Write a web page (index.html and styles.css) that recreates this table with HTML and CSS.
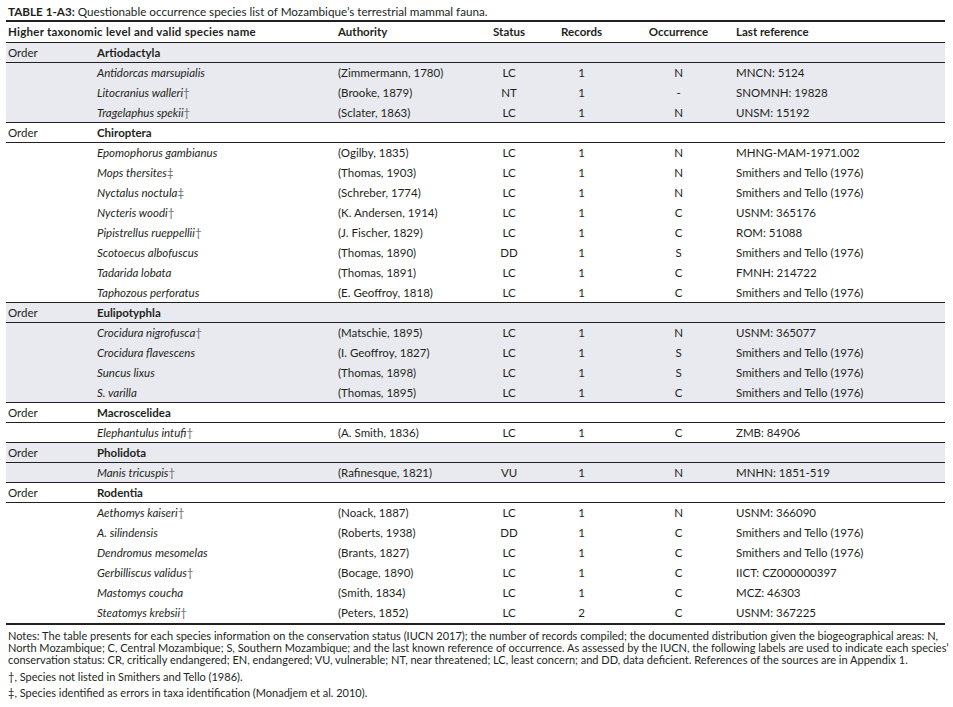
FILE: index.html
```html
<!DOCTYPE html>
<html lang="en">
<head>
<meta charset="utf-8">
<title>Table 1-A3</title>
<link rel="stylesheet" href="styles.css">
</head>
<body>
<div class="page">
  <h1 class="title"><b>TABLE 1-A3:</b> Questionable occurrence species list of Mozambique’s terrestrial mammal fauna.</h1>
  <table class="tbl">
    <colgroup>
      <col class="c1"><col class="c2"><col class="c3"><col class="c4"><col class="c5"><col class="c6"><col class="c7">
    </colgroup>
    <thead>
      <tr>
        <th colspan="2" class="l1 wide">Higher taxonomic level and valid species name</th>
        <th class="l3">Authority</th>
        <th class="ctr">Status</th>
        <th class="ctr">Records</th>
        <th class="occ">Occurrence</th>
        <th class="l7">Last reference</th>
      </tr>
    </thead>
    <tbody class="sh">
      <tr class="ord"><td class="l1">Order</td><td class="l2 grp">Artiodactyla</td><td></td><td></td><td></td><td></td><td></td></tr>
      <tr><td></td><td class="l2 sp">Antidorcas marsupialis</td><td class="l3">(Zimmermann, 1780)</td><td class="ctr">LC</td><td class="ctr">1</td><td class="occ">N</td><td class="l7">MNCN: 5124</td></tr>
      <tr><td></td><td class="l2 sp">Litocranius walleri<span class="mk">†</span></td><td class="l3">(Brooke, 1879)</td><td class="ctr">NT</td><td class="ctr">1</td><td class="occ">-</td><td class="l7">SNOMNH: 19828</td></tr>
      <tr class="end"><td></td><td class="l2 sp">Tragelaphus spekii<span class="mk">†</span></td><td class="l3">(Sclater, 1863)</td><td class="ctr">LC</td><td class="ctr">1</td><td class="occ">N</td><td class="l7">UNSM: 15192</td></tr>
    </tbody>
    <tbody>
      <tr class="ord"><td class="l1">Order</td><td class="l2 grp">Chiroptera</td><td></td><td></td><td></td><td></td><td></td></tr>
      <tr><td></td><td class="l2 sp">Epomophorus gambianus</td><td class="l3">(Ogilby, 1835)</td><td class="ctr">LC</td><td class="ctr">1</td><td class="occ">N</td><td class="l7">MHNG-MAM-1971.002</td></tr>
      <tr><td></td><td class="l2 sp">Mops thersites<span class="mk">‡</span></td><td class="l3">(Thomas, 1903)</td><td class="ctr">LC</td><td class="ctr">1</td><td class="occ">N</td><td class="l7">Smithers and Tello (1976)</td></tr>
      <tr><td></td><td class="l2 sp">Nyctalus noctula<span class="mk">‡</span></td><td class="l3">(Schreber, 1774)</td><td class="ctr">LC</td><td class="ctr">1</td><td class="occ">N</td><td class="l7">Smithers and Tello (1976)</td></tr>
      <tr><td></td><td class="l2 sp">Nycteris woodi<span class="mk">†</span></td><td class="l3">(K. Andersen, 1914)</td><td class="ctr">LC</td><td class="ctr">1</td><td class="occ">C</td><td class="l7">USNM: 365176</td></tr>
      <tr><td></td><td class="l2 sp">Pipistrellus rueppellii<span class="mk">†</span></td><td class="l3">(J. Fischer, 1829)</td><td class="ctr">LC</td><td class="ctr">1</td><td class="occ">C</td><td class="l7">ROM: 51088</td></tr>
      <tr><td></td><td class="l2 sp">Scotoecus albofuscus</td><td class="l3">(Thomas, 1890)</td><td class="ctr">DD</td><td class="ctr">1</td><td class="occ">S</td><td class="l7">Smithers and Tello (1976)</td></tr>
      <tr><td></td><td class="l2 sp">Tadarida lobata</td><td class="l3">(Thomas, 1891)</td><td class="ctr">LC</td><td class="ctr">1</td><td class="occ">C</td><td class="l7">FMNH: 214722</td></tr>
      <tr class="end"><td></td><td class="l2 sp">Taphozous perforatus</td><td class="l3">(E. Geoffroy, 1818)</td><td class="ctr">LC</td><td class="ctr">1</td><td class="occ">C</td><td class="l7">Smithers and Tello (1976)</td></tr>
    </tbody>
    <tbody class="sh">
      <tr class="ord"><td class="l1">Order</td><td class="l2 grp">Eulipotyphla</td><td></td><td></td><td></td><td></td><td></td></tr>
      <tr><td></td><td class="l2 sp">Crocidura nigrofusca<span class="mk">†</span></td><td class="l3">(Matschie, 1895)</td><td class="ctr">LC</td><td class="ctr">1</td><td class="occ">N</td><td class="l7">USNM: 365077</td></tr>
      <tr><td></td><td class="l2 sp">Crocidura flavescens</td><td class="l3">(I. Geoffroy, 1827)</td><td class="ctr">LC</td><td class="ctr">1</td><td class="occ">S</td><td class="l7">Smithers and Tello (1976)</td></tr>
      <tr><td></td><td class="l2 sp">Suncus lixus</td><td class="l3">(Thomas, 1898)</td><td class="ctr">LC</td><td class="ctr">1</td><td class="occ">S</td><td class="l7">Smithers and Tello (1976)</td></tr>
      <tr class="end"><td></td><td class="l2 sp">S. varilla</td><td class="l3">(Thomas, 1895)</td><td class="ctr">LC</td><td class="ctr">1</td><td class="occ">C</td><td class="l7">Smithers and Tello (1976)</td></tr>
    </tbody>
    <tbody>
      <tr class="ord"><td class="l1">Order</td><td class="l2 grp">Macroscelidea</td><td></td><td></td><td></td><td></td><td></td></tr>
      <tr class="end"><td></td><td class="l2 sp">Elephantulus intufi<span class="mk">†</span></td><td class="l3">(A. Smith, 1836)</td><td class="ctr">LC</td><td class="ctr">1</td><td class="occ">C</td><td class="l7">ZMB: 84906</td></tr>
    </tbody>
    <tbody class="sh">
      <tr class="ord"><td class="l1">Order</td><td class="l2 grp">Pholidota</td><td></td><td></td><td></td><td></td><td></td></tr>
      <tr class="end"><td></td><td class="l2 sp">Manis tricuspis<span class="mk">†</span></td><td class="l3">(Rafinesque, 1821)</td><td class="ctr">VU</td><td class="ctr">1</td><td class="occ">N</td><td class="l7">MNHN: 1851-519</td></tr>
    </tbody>
    <tbody>
      <tr class="ord"><td class="l1">Order</td><td class="l2 grp">Rodentia</td><td></td><td></td><td></td><td></td><td></td></tr>
      <tr><td></td><td class="l2 sp">Aethomys kaiseri<span class="mk">†</span></td><td class="l3">(Noack, 1887)</td><td class="ctr">LC</td><td class="ctr">1</td><td class="occ">N</td><td class="l7">USNM: 366090</td></tr>
      <tr><td></td><td class="l2 sp">A. silindensis</td><td class="l3">(Roberts, 1938)</td><td class="ctr">DD</td><td class="ctr">1</td><td class="occ">C</td><td class="l7">Smithers and Tello (1976)</td></tr>
      <tr><td></td><td class="l2 sp">Dendromus mesomelas</td><td class="l3">(Brants, 1827)</td><td class="ctr">LC</td><td class="ctr">1</td><td class="occ">C</td><td class="l7">Smithers and Tello (1976)</td></tr>
      <tr><td></td><td class="l2 sp">Gerbilliscus validus<span class="mk">†</span></td><td class="l3">(Bocage, 1890)</td><td class="ctr">LC</td><td class="ctr">1</td><td class="occ">C</td><td class="l7">IICT: CZ000000397</td></tr>
      <tr><td></td><td class="l2 sp">Mastomys coucha</td><td class="l3">(Smith, 1834)</td><td class="ctr">LC</td><td class="ctr">1</td><td class="occ">C</td><td class="l7">MCZ: 46303</td></tr>
      <tr><td></td><td class="l2 sp">Steatomys krebsii<span class="mk">†</span></td><td class="l3">(Peters, 1852)</td><td class="ctr">LC</td><td class="ctr">2</td><td class="occ">C</td><td class="l7">USNM: 367225</td></tr>
    </tbody>
  </table>
  <div class="notes">
    <p class="para">Notes: The table presents for each species information on the conservation status (IUCN 2017); the number of records compiled; the documented distribution given the biogeographical areas: N,<br>North Mozambique; C, Central Mozambique; S, Southern Mozambique; and the last known reference of occurrence. As assessed by the IUCN, the following labels are used to indicate each species’<br>conservation status: CR, critically endangered; EN, endangered; VU, vulnerable; NT, near threatened; LC, least concern; and DD, data deficient. References of the sources are in Appendix 1.</p>
    <p class="fn">†, Species not listed in Smithers and Tello (1986).</p>
    <p class="fn">‡, Species identified as errors in taxa identification (Monadjem et al. 2010).</p>
  </div>
</div>
</body>
</html>
```
FILE: styles.css
```css
html, body {
  margin: 0;
  padding: 0;
  background: #ffffff;
}

body {
  color: #231f20;
  font-family: Lato, "Liberation Sans", sans-serif;
}

.page {
  width: 939px;
  margin-left: 6px;
}

.title {
  margin: 0;
  padding: 3px 0 0 2px;
  height: 17px;
  line-height: 17px;
  font-size: 11.7px;
  font-weight: normal;
  white-space: nowrap;
}

.title b {
  font-weight: bold;
}

.tbl {
  width: 939px;
  table-layout: fixed;
  border-collapse: separate;
  border-spacing: 0;
  border-top: 2px solid #231f20;
  border-bottom: 2px solid #231f20;
  font-size: 11.5px;
}

.c1 { width: 87px; }
.c2 { width: 242px; }
.c3 { width: 135px; }
.c4 { width: 78px; }
.c5 { width: 67px; }
.c6 { width: 119px; }
.c7 { width: 211px; }

.tbl th,
.tbl td {
  padding: 0;
  line-height: 20px;
  white-space: nowrap;
  overflow: hidden;
  vertical-align: middle;
  text-align: left;
}

.tbl th {
  font-weight: bold;
  border-bottom: 1px solid #231f20;
}

.tbl th.wide {
  letter-spacing: 0.25px;
}

.tbl .ord td,
.tbl .end td {
  line-height: 19px;
  border-bottom: 1px solid #231f20;
}

.tbl .sh td {
  background: #e9eaef;
}

.l1 { padding-left: 2px !important; }
.l2 { padding-left: 4px !important; }
.l3 { padding-left: 3px !important; }
.l7 { padding-left: 2px !important; }
.tbl .ctr { text-align: center; }
.tbl .occ { text-align: center; padding-left: 8px; }

.grp { font-weight: bold; }
.sp { font-style: italic; }

.mk {
  font-style: normal;
  color: #6b6b6b;
}

.notes {
  padding-left: 2px;
  font-size: 11px;
  line-height: 12.2px;
  white-space: nowrap;
}

.notes p {
  margin: 0;
}

.para {
  padding-top: 5px;
}

.fn {
  margin-top: 4px !important;
}
```
